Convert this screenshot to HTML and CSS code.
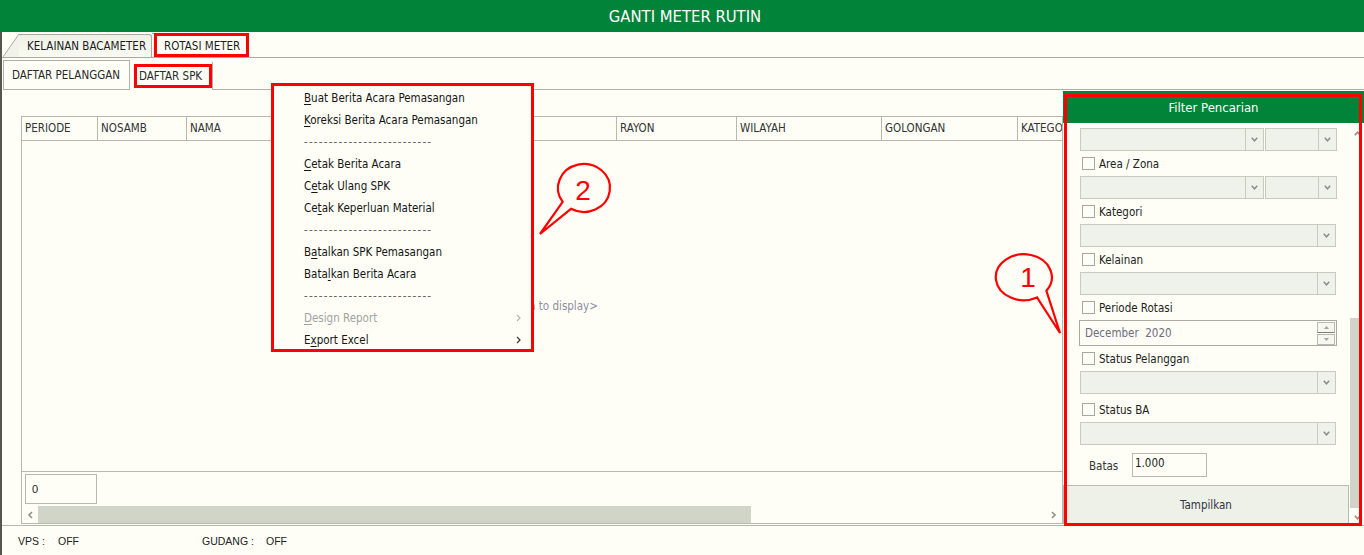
FILE: index.html
```html
<!DOCTYPE html>
<html>
<head>
<meta charset="utf-8">
<title>Ganti Meter Rutin</title>
<link rel="stylesheet" href="styles.css">
</head>
<body>
<div class="app">
  <header class="titlebar">GANTI METER RUTIN</header>
  <div class="frame">
    <nav class="tabs-top">
      <div class="ttab ttab-inactive">
        <svg class="slant" width="16" height="23" viewBox="0 0 16 23"><polygon points="0,23 16,0 16,23" fill="#f1f3ea"/><line x1="0" y1="23" x2="16" y2="0" stroke="#a9ab9f" stroke-width="1"/></svg>
        <span class="lbl">KELAINAN BACAMETER</span>
      </div>
      <div class="ttab ttab-active">ROTASI METER</div>
    </nav>
    <nav class="tabs-sub">
      <div class="stab">DAFTAR PELANGGAN</div>
      <div class="stab stab-active">DAFTAR SPK</div>
      <div class="stab-fill"></div>
    </nav>
    <div class="main">
      <section class="content">
        <div class="grid">
          <div class="grid-head">
            <div class="hc w1">PERIODE</div>
            <div class="hc w2">NOSAMB</div>
            <div class="hc w3">NAMA</div>
            <div class="hc w4"></div>
            <div class="hc w5">RAYON</div>
            <div class="hc w6">WILAYAH</div>
            <div class="hc w7">GOLONGAN</div>
            <div class="hc w8">KATEGORI</div>
          </div>
          <div class="grid-body"><span class="nodata">&lt;No data to display&gt;</span></div>
          <div class="grid-foot"><div class="count">0</div></div>
          <div class="hscroll">
            <div class="harrow"><svg width="6" height="8" viewBox="0 0 6 8"><polyline points="5,1 2,4 5,7" fill="none" stroke="#8c9086" stroke-width="1.6"/></svg></div>
            <div class="hthumb"></div>
            <div class="htrack"></div>
            <div class="harrow"><svg width="6" height="8" viewBox="0 0 6 8"><polyline points="1,1 4,4 1,7" fill="none" stroke="#8c9086" stroke-width="1.6"/></svg></div>
          </div>
        </div>
      </section>
      <aside class="filter">
        <div class="filter-head">Filter Pencarian</div>
        <div class="filter-wrap">
          <div class="filter-col">
            <div class="form">
              <div class="combo-row">
                <div class="combo combo-a"><div class="face"></div><div class="dd"><svg width="7" height="5" viewBox="0 0 7 5"><polyline points="0.8,0.8 3.5,3.8 6.2,0.8" fill="none" stroke="#8d9086" stroke-width="1.6"/></svg></div></div>
                <div class="combo combo-b"><div class="face"></div><div class="dd"><svg width="7" height="5" viewBox="0 0 7 5"><polyline points="0.8,0.8 3.5,3.8 6.2,0.8" fill="none" stroke="#8d9086" stroke-width="1.6"/></svg></div></div>
              </div>
              <div class="chk"><span class="box"></span><span>Area / Zona</span></div>
              <div class="combo-row">
                <div class="combo combo-a"><div class="face"></div><div class="dd"><svg width="7" height="5" viewBox="0 0 7 5"><polyline points="0.8,0.8 3.5,3.8 6.2,0.8" fill="none" stroke="#8d9086" stroke-width="1.6"/></svg></div></div>
                <div class="combo combo-b"><div class="face"></div><div class="dd"><svg width="7" height="5" viewBox="0 0 7 5"><polyline points="0.8,0.8 3.5,3.8 6.2,0.8" fill="none" stroke="#8d9086" stroke-width="1.6"/></svg></div></div>
              </div>
              <div class="chk"><span class="box"></span><span>Kategori</span></div>
              <div class="combo combo-full"><div class="face"></div><div class="dd"><svg width="7" height="5" viewBox="0 0 7 5"><polyline points="0.8,0.8 3.5,3.8 6.2,0.8" fill="none" stroke="#8d9086" stroke-width="1.6"/></svg></div></div>
              <div class="chk"><span class="box"></span><span>Kelainan</span></div>
              <div class="combo combo-full"><div class="face"></div><div class="dd"><svg width="7" height="5" viewBox="0 0 7 5"><polyline points="0.8,0.8 3.5,3.8 6.2,0.8" fill="none" stroke="#8d9086" stroke-width="1.6"/></svg></div></div>
              <div class="chk"><span class="box"></span><span>Periode Rotasi</span></div>
              <div class="date">
                <span class="date-text">December&nbsp; 2020</span>
                <div class="spin">
                  <div class="sp"><svg width="5" height="3" viewBox="0 0 5 3"><polygon points="0,3 2.5,0 5,3" fill="#a0a49a"/></svg></div>
                  <div class="sp"><svg width="5" height="3" viewBox="0 0 5 3"><polygon points="0,0 2.5,3 5,0" fill="#a0a49a"/></svg></div>
                </div>
              </div>
              <div class="chk"><span class="box"></span><span>Status Pelanggan</span></div>
              <div class="combo combo-full"><div class="face"></div><div class="dd"><svg width="7" height="5" viewBox="0 0 7 5"><polyline points="0.8,0.8 3.5,3.8 6.2,0.8" fill="none" stroke="#8d9086" stroke-width="1.6"/></svg></div></div>
              <div class="chk chk-ba"><span class="box"></span><span>Status BA</span></div>
              <div class="combo combo-full"><div class="face"></div><div class="dd"><svg width="7" height="5" viewBox="0 0 7 5"><polyline points="0.8,0.8 3.5,3.8 6.2,0.8" fill="none" stroke="#8d9086" stroke-width="1.6"/></svg></div></div>
              <div class="batas">
                <span class="batas-lbl">Batas</span>
                <div class="batas-input">1.000</div>
              </div>
            </div>
            <button class="btn">Tampilkan</button>
          </div>
          <div class="vscroll">
            <div class="varrow-up"><svg width="7" height="5" viewBox="0 0 7 5"><polyline points="0.8,4.2 3.5,1.2 6.2,4.2" fill="none" stroke="#8d9086" stroke-width="1.6"/></svg></div>
            <div class="vtrack"><div class="vthumb"></div></div>
            <div class="varrow-down"><svg width="7" height="5" viewBox="0 0 7 5"><polyline points="0.8,0.8 3.5,3.8 6.2,0.8" fill="none" stroke="#8d9086" stroke-width="1.6"/></svg></div>
          </div>
        </div>
      </aside>
    </div>
    <footer class="status">
      <span class="s-l1">VPS :</span>
      <span class="s-v1">OFF</span>
      <span class="s-l2">GUDANG :</span>
      <span>OFF</span>
    </footer>
  </div>

  <div class="menu">
    <div class="mi"><span><u>B</u>uat Berita Acara Pemasangan</span></div>
    <div class="mi"><span><u>K</u>oreksi Berita Acara Pemasangan</span></div>
    <div class="mi sep">--------------------------</div>
    <div class="mi"><span><u>C</u>etak Berita Acara</span></div>
    <div class="mi"><span>C<u>e</u>tak Ulang SPK</span></div>
    <div class="mi"><span>Ce<u>t</u>ak Keperluan Material</span></div>
    <div class="mi sep">--------------------------</div>
    <div class="mi"><span>B<u>a</u>talkan SPK Pemasangan</span></div>
    <div class="mi"><span>Bata<u>l</u>kan Berita Acara</span></div>
    <div class="mi sep">--------------------------</div>
    <div class="mi dis"><span><u>D</u>esign Report</span><svg width="5" height="8" viewBox="0 0 5 8"><polyline points="1,1 4,4 1,7" fill="none" stroke="#b4b4b4" stroke-width="1.2"/></svg></div>
    <div class="mi"><span>E<u>x</u>port Excel</span><svg width="5" height="8" viewBox="0 0 5 8"><polyline points="1,1 4,4 1,7" fill="none" stroke="#333" stroke-width="1.2"/></svg></div>
  </div>

  <svg class="annot" width="1364" height="555" viewBox="0 0 1364 555">
    <rect x="155.5" y="34.5" width="92" height="21" fill="none" stroke="#ff0000" stroke-width="3"/>
    <rect x="135.5" y="65.5" width="75" height="21" fill="none" stroke="#ff0000" stroke-width="3"/>
    <rect x="1065.5" y="95.5" width="295" height="429" fill="none" stroke="#ff0000" stroke-width="3"/>
    <path d="M 571 208.8 A 26 24 0 1 0 562.7 201.8 L 540 234 Z" fill="#fefef6" stroke="#ff0000" stroke-width="2.2" stroke-linejoin="miter"/>
    <text x="583" y="200" class="num">2</text>
    <path d="M 1037 297.5 A 28 23 0 1 1 1046.4 290.8 L 1060 333 Z" fill="#fefef6" stroke="#ff0000" stroke-width="2.2" stroke-linejoin="miter"/>
    <text x="1028" y="287" class="num">1</text>
  </svg>
</div>
</body>
</html>
```
FILE: styles.css
```css
* { box-sizing: border-box; }
html, body { margin: 0; padding: 0; }
body {
  background: #fefef6;
  font-family: "DejaVu Sans Condensed", "Open Sans", sans-serif;
  font-size: 11.5px;
  color: #222;
}
.app {
  position: relative;
  width: 1364px;
  height: 555px;
  overflow: hidden;
  background: #fefef6;
}
.titlebar {
  height: 32px;
  background: #01833a;
  color: #fff;
  font-size: 16.5px;
  display: flex;
  align-items: center;
  justify-content: center;
  padding-left: 6px;
}
.frame {
  height: 523px;
  border-left: 2px solid #56564e;
  display: flex;
  flex-direction: column;
}

/* top tabs */
.tabs-top {
  height: 26px;
  flex: none;
  border-bottom: 1px solid #a9ab9f;
  display: flex;
  align-items: flex-end;
  padding-left: 1px;
}
.ttab {
  display: flex;
  align-items: center;
  color: #1c1c1c;
  white-space: nowrap;
}
.ttab-inactive { height: 23px; }
.slant { display: block; flex: none; }
.ttab-inactive .lbl {
  height: 23px;
  width: 133px;
  display: flex;
  align-items: center;
  padding: 0 2px 0 8px;
  border-top: 1px solid #a9ab9f;
  border-right: 1px solid #a9ab9f;
  border-top-right-radius: 3px;
  background: linear-gradient(#eff1e7, #fafaf2);
}
.ttab-active {
  height: 24px;
  width: 97px;
  padding-left: 12px;
  border-top: 1px solid #a9ab9f;
  border-right: 1px solid #a9ab9f;
}

/* sub tabs */
.tabs-sub {
  height: 32px;
  flex: none;
  display: flex;
  align-items: flex-end;
  padding-left: 1px;
}
.stab {
  height: 30px;
  width: 127px;
  border: 1px solid #aeb0a5;
  padding-left: 8px;
  display: flex;
  align-items: center;
  color: #2a2a2a;
  white-space: nowrap;
}
.stab-active {
  height: 28px;
  width: 83px;
  border: none;
  border-right: 1px solid #aeb0a5;
  padding-left: 9px;
}
.stab-fill {
  flex: 1;
  height: 1px;
  background: #aeb0a5;
}

/* main */
.main {
  height: 435px;
  flex: none;
  display: flex;
}
.content {
  width: 1061px;
  flex: none;
  padding: 26px 0 0 19px;
}
.grid {
  width: 1042px;
  height: 408px;
  border: 1px solid #b6b9ae;
  display: flex;
  flex-direction: column;
}
.grid-head {
  height: 24px;
  flex: none;
  border-bottom: 1px solid #b6b9ae;
  display: flex;
  overflow: hidden;
}
.hc {
  flex: none;
  border-right: 1px solid #b6b9ae;
  padding-left: 3px;
  line-height: 23px;
  color: #333;
  white-space: nowrap;
  overflow: hidden;
}
.w1 { width: 76px; }
.w2 { width: 89px; }
.w3 { width: 214px; }
.w4 { width: 216px; }
.w5 { width: 120px; }
.w6 { width: 145px; }
.w7 { width: 136px; }
.w8 { width: 60px; }
.grid-body {
  height: 331px;
  flex: none;
  border-bottom: 1px solid #b6b9ae;
  display: flex;
  align-items: center;
  justify-content: center;
}
.nodata { color: #8e8ea3; }
.grid-foot {
  height: 34px;
  flex: none;
  padding: 2px 0 0 3px;
}
.count {
  width: 72px;
  height: 30px;
  border: 1px solid #b6b9ae;
  display: flex;
  align-items: center;
  padding-left: 6px;
  font-family: "Liberation Sans", Arial, sans-serif;
  font-size: 11px;
  color: #222;
}
.hscroll {
  height: 17px;
  flex: none;
  display: flex;
}
.harrow {
  width: 16px;
  flex: none;
  display: flex;
  align-items: center;
  justify-content: center;
}
.hthumb {
  width: 713px;
  flex: none;
  background: #d0d5c8;
}
.htrack { flex: 1; }

/* filter */
.filter {
  width: 301px;
  flex: none;
  height: 435px;
  padding-top: 1px;
  display: flex;
  flex-direction: column;
}
.filter-head {
  height: 32px;
  flex: none;
  background: #01833a;
  color: #fff;
  font-size: 13px;
  display: flex;
  align-items: center;
  justify-content: center;
}
.filter-wrap {
  flex: 1;
  display: flex;
}
.filter-col {
  width: 286px;
  flex: none;
  display: flex;
  flex-direction: column;
}
.form {
  flex: 1;
  padding: 5px 0 0 17px;
  font-size: 11.5px;
  color: #222;
}
.combo-row { display: flex; gap: 1px; }
.combo {
  height: 23px;
  display: flex;
  border: 1px solid #c8cbbf;
  background: #eef2ea;
}
.combo-a { width: 184px; }
.combo-b { width: 72px; }
.combo-full { width: 256px; }
.combo .face { flex: 1; }
.combo .dd {
  width: 18px;
  flex: none;
  border-left: 1px solid #c8cbbf;
  display: flex;
  align-items: center;
  justify-content: center;
}
.chk {
  height: 13px;
  margin: 6px 0 6px 2px;
  display: flex;
  align-items: center;
  gap: 4px;
  white-space: nowrap;
}
.chk-ba { margin-top: 9px; }
.box {
  width: 13px;
  height: 13px;
  flex: none;
  border: 1px solid #a6a99f;
  background: #fefef8;
}
.date {
  width: 258px;
  height: 26px;
  margin-left: -1px;
  border: 1px solid #a6aa9f;
  background: #fefef6;
  display: flex;
  align-items: center;
  padding-left: 5px;
}
.date-text { color: #6c6c80; }
.spin {
  margin-left: auto;
  margin-right: 1px;
  width: 18px;
  display: flex;
  flex-direction: column;
  gap: 1px;
}
.sp {
  height: 11px;
  border: 1px solid #b8bcb0;
  background: #f6f7f1;
  display: flex;
  align-items: center;
  justify-content: center;
}
.sp:first-child { border-bottom: 1px solid #7d8077; }
.batas {
  margin-top: 8px;
  display: flex;
  align-items: flex-start;
}
.batas-lbl {
  width: 43px;
  margin-left: 9px;
  padding-top: 6px;
  color: #333;
}
.batas-input {
  width: 75px;
  height: 24px;
  border: 1px solid #b8bcb0;
  background: #fefef6;
  padding: 2px 0 0 2px;
  color: #222;
}
.btn {
  height: 39px;
  flex: none;
  margin: 0 0 1px 0;
  border: 1px solid #b8bcb0;
  background: #eef1e8;
  font-family: inherit;
  font-size: 11.5px;
  color: #333344;
  padding: 0;
}
.vscroll {
  width: 15px;
  flex: none;
  display: flex;
  flex-direction: column;
}
.varrow-up {
  height: 20px;
  display: flex;
  justify-content: center;
  padding: 8px 0 0 1px;
}
.vtrack { flex: 1; }
.vthumb {
  margin: 175px 0 0 1px;
  width: 11px;
  height: 190px;
  background: #d0d5c8;
}
.varrow-down {
  height: 16px;
  display: flex;
  justify-content: center;
  padding: 6px 0 0 1px;
}

/* status */
.status {
  height: 30px;
  flex: none;
  border-top: 1px solid #b4b6ac;
  display: flex;
  align-items: center;
  padding-left: 16px;
  font-family: "Liberation Sans", Arial, sans-serif;
  font-size: 10.5px;
  color: #222;
}
.s-l1 { width: 40px; }
.s-v1 { width: 144px; }
.s-l2 { width: 64px; }

/* context menu */
.menu {
  position: absolute;
  left: 271px;
  top: 83px;
  width: 263px;
  height: 269px;
  border: 3px solid #ff0000;
  background: #fefef6;
  padding: 1px 10px 0 30px;
}
.mi {
  height: 22px;
  display: flex;
  align-items: center;
  justify-content: space-between;
  color: #151515;
  white-space: nowrap;
}
.mi.dis { color: #a2a2a2; }
.mi.sep { letter-spacing: 1.2px; color: #666; }
.mi u { text-underline-offset: 2px; }

/* annotations */
.annot {
  position: absolute;
  left: 0;
  top: 0;
  pointer-events: none;
}
.num {
  font-family: "Liberation Sans", Arial, sans-serif;
  font-size: 28px;
  fill: #ff0000;
  text-anchor: middle;
}
```
